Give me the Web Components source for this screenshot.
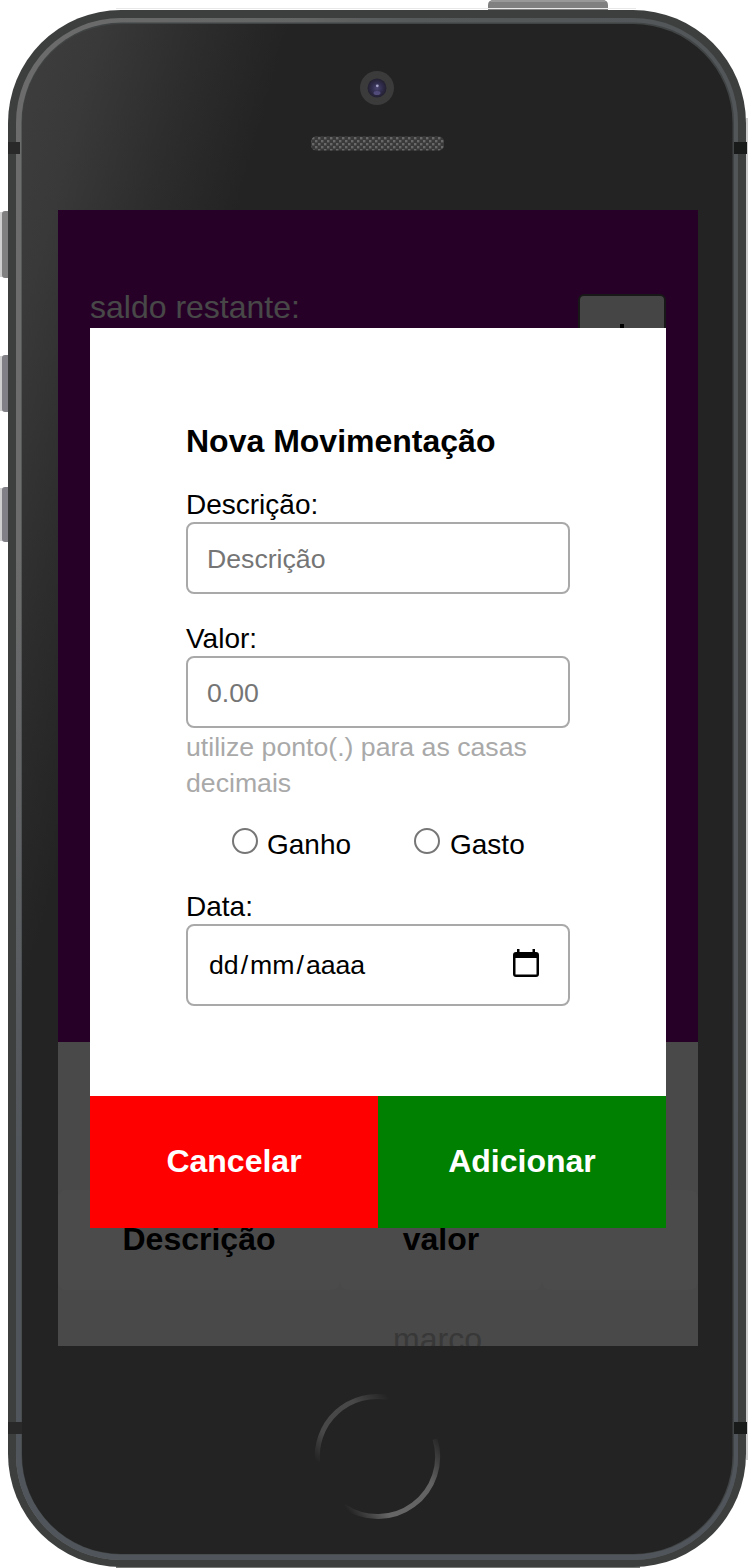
<!DOCTYPE html>
<html lang="pt-BR">
<head>
<meta charset="utf-8">
<title>Nova Movimentação</title>
<style>
html,body{margin:0;padding:0;background:#fff}
body{font-family:"Liberation Sans",Arial,sans-serif;color:#000;width:748px;height:1568px;overflow:hidden}
</style>
</head>
<body>
<phone-frame>
  <finance-page></finance-page>
  <movement-dialog slot="dialog">
    <form-field label="Descrição:" placeholder="Descrição"></form-field>
    <form-field label="Valor:" placeholder="0.00">utilize ponto(.) para as casas decimais</form-field>
    <kind-picker></kind-picker>
    <date-field></date-field>
  </movement-dialog>
</phone-frame>
<script>
const define = (name, html) => customElements.define(name, class extends HTMLElement {
  constructor() {
    super();
    const root = this.attachShadow({mode: 'open'});
    root.innerHTML = html;
  }
  connectedCallback() {
    for (const el of this.shadowRoot.querySelectorAll('[data-attr]')) {
      el.textContent = this.getAttribute(el.dataset.attr) || '';
    }
  }
});

define('phone-frame', `
<style>
:host{display:grid;position:relative;box-sizing:border-box;width:748px;height:1568px;padding:210px 50px 222px 58px;overflow:hidden}
svg{position:absolute;left:0;top:0;width:748px;height:1568px}
.screen{position:relative;display:grid;overflow:hidden;height:1136px}
.page,.shade{grid-area:1/1;min-height:0}
.shade{position:relative;padding:118px 32px;background:rgba(0,0,0,.7)}
</style>
<svg viewBox="0 0 748 1568" aria-hidden="true">
  <defs>
    <linearGradient id="glass" gradientUnits="userSpaceOnUse" x1="22" y1="24" x2="271" y2="92">
      <stop offset="0" stop-color="#3e3e3e"/><stop offset=".3" stop-color="#393939"/><stop offset=".65" stop-color="#2d2d2d"/><stop offset="1" stop-color="#232323"/>
    </linearGradient>
    <linearGradient id="rim" x1="0" y1="0" x2="1" y2="0">
      <stop offset="0" stop-color="#6c6c6c"/><stop offset=".4" stop-color="#646565"/><stop offset=".55" stop-color="#565a5a"/><stop offset="1" stop-color="#535659"/>
    </linearGradient>
    <linearGradient id="rimfade" x1="0" y1="0" x2="0" y2="1">
      <stop offset=".35" stop-color="#50555b" stop-opacity="0"/><stop offset=".75" stop-color="#50555b"/>
    </linearGradient>
    <linearGradient id="home1" gradientUnits="userSpaceOnUse" x1="317" y1="1462" x2="388" y2="1396">
      <stop offset="0" stop-color="#484848" stop-opacity="0"/><stop offset=".25" stop-color="#484848"/><stop offset=".7" stop-color="#484848"/><stop offset="1" stop-color="#484848" stop-opacity="0"/>
    </linearGradient>
    <linearGradient id="home2" gradientUnits="userSpaceOnUse" x1="344" y1="1506" x2="435" y2="1432">
      <stop offset="0" stop-color="#666" stop-opacity="0"/><stop offset=".25" stop-color="#666"/><stop offset=".7" stop-color="#626262"/><stop offset="1" stop-color="#606060" stop-opacity="0"/>
    </linearGradient>
    <radialGradient id="lens"><stop offset="0" stop-color="#4a4670"/><stop offset=".55" stop-color="#302c4c"/><stop offset="1" stop-color="#232030"/></radialGradient>
    <pattern id="mesh" width="6" height="6" patternUnits="userSpaceOnUse" x="312" y="137">
      <rect width="6" height="6" fill="#393939"/><rect width="2.4" height="2.4" fill="#686868"/><rect x="3" y="3" width="2.4" height="2.4" fill="#686868"/>
    </pattern>
  </defs>
  <path d="M488 14V5Q488 0 494 0H602Q608 0 608 5V14Z" fill="#808080"/><path d="M492 0H604L606 2H490Z" fill="#999"/>
  <g fill="#cfcfcf"><rect y="212" width="3" height="65"/><rect y="356" width="3" height="55"/><rect y="488" width="3" height="53"/></g>
  <rect x="2" y="211" width="12" height="67" rx="3" fill="#808080"/>
  <rect x="2" y="355" width="12" height="57" rx="3" fill="#808086"/>
  <rect x="2" y="487" width="12" height="55" rx="3" fill="#808086"/>
  <path d="M747 118V1460" stroke="#ccc" stroke-width="2"/>
  <path d="M116 8.500H636" stroke="#e8e8e8" stroke-width="1"/>
  <path d="M116 1567H640" stroke="#777a77" stroke-width="2"/>
  <rect x="8" y="10" width="738" height="1557" rx="113" fill="#3d3f3e"/>
  <rect x="16" y="18" width="722" height="1542" rx="105" fill="url(#rim)"/>
  <rect x="16" y="18" width="722" height="1542" rx="105" fill="url(#rimfade)"/>
  <rect x="21.500" y="22.500" width="712.500" height="1532" rx="100" fill="#414445"/>
  <rect x="22" y="24" width="710.500" height="1530" rx="99" fill="url(#glass)"/>
  <g fill="#292929"><rect x="8" y="142" width="12" height="12"/><rect x="8" y="1422" width="14" height="12"/></g>
  <g fill="#191b1b"><rect x="734" y="142" width="13" height="12"/><rect x="734" y="1422" width="13" height="12"/></g>
  <circle cx="377" cy="88" r="17" fill="#3b3b3c"/><circle cx="377" cy="88" r="9.500" fill="url(#lens)"/>
  <circle cx="377.300" cy="85.800" r="1.400" fill="#a6a4c8"/><ellipse cx="377" cy="93" rx="3.500" ry="2" fill="#504b78"/>
  <rect x="311" y="136.500" width="133" height="14" rx="5" fill="url(#mesh)"/>
  <path d="M317.500 1462A60 60 0 0 1 388 1397.400" fill="none" stroke="url(#home1)" stroke-width="5"/>
  <path d="M344 1506.300A60 60 0 0 0 435 1439" fill="none" stroke="url(#home2)" stroke-width="5"/>
</svg>
<div class="screen"><div class="page"><slot></slot></div><div class="shade"><slot name="dialog"></slot></div></div>`);

define('finance-page', `
<style>
:host{display:block;height:1136px;overflow:hidden;background:#f3f3f3;font-size:32px;line-height:36px}
header{display:flex;justify-content:space-between;align-items:flex-start;box-sizing:border-box;height:832px;padding:79px 32px 0;background:rgb(127,0,130)}
.balance{color:#f0f0f0}
.add{box-sizing:border-box;width:88px;height:88px;margin-top:5px;border:2px solid #505050;border-radius:6px;background:#e6e6e6;display:grid;place-items:center}
.tabs{height:148px}
.table{display:grid;grid-template-columns:282px 202px 156px;text-align:center}
b{background:#fafafa;border-radius:8px;height:100px;box-sizing:border-box;padding-top:31px}
span{padding-top:31px;color:#bbb}
.who{padding-right:7px}
</style>
<header><div class="balance">saldo restante:</div><div class="add"><svg width="32" height="32" viewBox="0 0 32 32"><path d="M16 2V30M2 16H30" stroke="#000" stroke-width="4"/></svg></div></header>
<div class="tabs"></div>
<div class="table"><b>Descrição</b><b>valor</b><b></b><span></span><span class="who">marco</span><span></span></div>`);

define('movement-dialog', `
<style>
:host{display:flex;flex-direction:column;width:576px;height:900px;background:#fff}
.body{flex:1;display:flex;flex-direction:column;padding:95px 96px 0}
h2{font-size:32px;line-height:36px;margin:0 0 27px}
.actions{display:grid;grid-template-columns:1fr 1fr;height:132px}
button{border:0;margin:0;padding:0 0 2px;font:bold 32px "Liberation Sans",Arial,sans-serif;color:#fff;background:red}
.ok{background:green}
</style>
<div class="body"><h2>Nova Movimentação</h2><slot></slot></div>
<div class="actions"><button>Cancelar</button><button class="ok">Adicionar</button></div>`);

define('form-field', `
<style>
:host{display:block;margin-bottom:26px}
label{display:block;height:36px;font-size:28px;line-height:38px}
.input{box-sizing:border-box;height:72px;padding:0 19px;border:2px solid #a9a9a9;border-radius:8px;color:#757575;font-size:26.667px;line-height:71px}
.hint{color:#a9a9a9;font-size:26.667px;line-height:36px}
.hint slot{display:block;padding-top:1px;margin-bottom:-1px}
</style>
<label data-attr="label"></label><div class="input" data-attr="placeholder"></div><div class="hint"><slot></slot></div>`);

define('kind-picker', `
<style>
:host{display:flex;height:36px;margin-bottom:26px;font-size:28px;line-height:38px}
label{display:flex;padding-left:46px;width:136px}
i{box-sizing:border-box;width:26px;height:26px;border:2px solid #767676;border-radius:50%;margin:2px 9px 0 0}
label + label i{margin-right:10px}
</style>
<label><i></i>Ganho</label><label><i></i>Gasto</label>`);

define('date-field', `
<style>
:host{display:block}
label{display:block;height:36px;font-size:28px;line-height:38px}
.input{display:flex;align-items:center;justify-content:space-between;box-sizing:border-box;height:82px;padding:0 28px 0 19px;border:2px solid #a9a9a9;border-radius:8px;font-size:26.667px}
.mask{display:flex}
.mask span{padding:0 2px}
svg{margin-top:-4px}
</style>
<label>Data:</label>
<div class="input"><div class="mask"><span>dd</span>/<span>mm</span>/<span>aaaa</span></div>
<svg width="28" height="28" viewBox="0 0 28 28"><path fill-rule="evenodd" d="M5 0H7.500V3H20.500V0H23V3H24Q27 3 27 6V25Q27 28 24 28H4Q1 28 1 25V6Q1 3 4 3H5ZM3.500 9V25.500H24.500V9Z"/></svg></div>`);
</script>
</body>
</html>
